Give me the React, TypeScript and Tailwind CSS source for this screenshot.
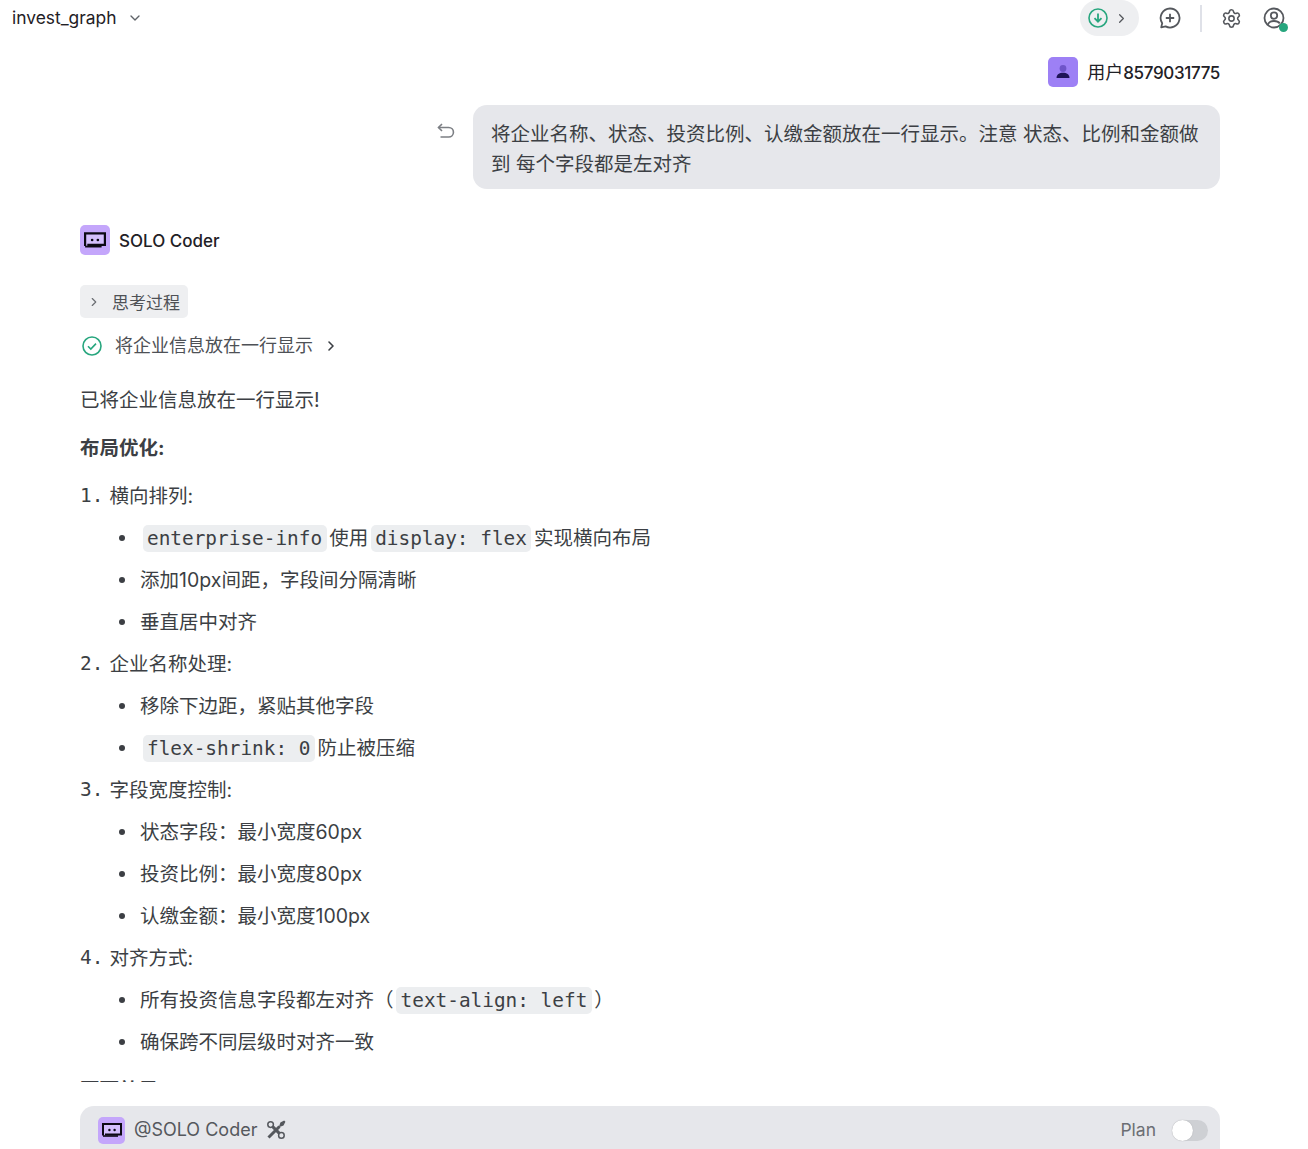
import type { ReactNode } from "react";
import { ChevronDown, ChevronRight, Settings } from "lucide-react";

const bodyFont = "font-['Inter','Noto_Sans_CJK_SC',sans-serif]";

function Code({ children }: { children: ReactNode }) {
  return (
    <code className="mx-[2.5px] rounded-[5px] bg-[#eceef0] px-[4.5px] py-[2px] font-['DejaVu_Sans_Mono',monospace] text-[19.4px] text-[#3c3f44]">
      {children}
    </code>
  );
}

function Item({ children }: { children: ReactNode }) {
  return (
    <li className="flex h-[42px] items-center pl-[39px]">
      <span className="mr-[15px] size-[6px] shrink-0 rounded-full bg-[#3c3f44]" />
      <span>{children}</span>
    </li>
  );
}

function Numbered({ n, children }: { n: number; children: ReactNode }) {
  return (
    <div className="flex h-[42px] items-center">
      <span className="mr-[6px] font-['DejaVu_Sans_Mono',monospace] text-[19.4px]">{n}.</span>
      <span>{children}</span>
    </div>
  );
}

function CoderLogo({ size, className }: { size: number; className: string }) {
  return (
    <span className={`flex shrink-0 items-center justify-center rounded-[5px] bg-[#c4a6fb] ${className}`}>
      <svg width={size} height={size} viewBox="0 0 20 20" fill="none">
        <rect x="2" y="5" width="16" height="9" fill="#d4bffc" />
        <path d="M1 15.5V4h18v10.5H3" stroke="#0d0a14" strokeWidth="2" />
        <path d="M1 16h15" stroke="#0d0a14" strokeWidth="1.6" />
        <circle cx="7.4" cy="10" r="1.2" fill="#0d0a14" />
        <circle cx="12.6" cy="10" r="1.2" fill="#0d0a14" />
      </svg>
    </span>
  );
}

function Header() {
  return (
    <header className="flex h-9 shrink-0 items-center justify-between pl-3 pr-[23px]">
      <div className="flex items-center text-[17.4px] text-[#1f2126]">
        <span>invest_graph</span>
        <ChevronDown size={16} strokeWidth={2} className="ml-[10px] text-[#5f6368]" />
      </div>
      <div className="flex items-center text-[#55585d]">
        <div className="flex h-9 w-[59px] items-center gap-[6px] rounded-full bg-[#eeeff1] pl-[8px]">
          <svg width="20" height="20" viewBox="0 0 20 20" fill="none" stroke="#27a67e" strokeWidth="1.6">
            <circle cx="10" cy="10" r="9" />
            <path d="M10 5.5v8M6.5 10.2 10 13.7l3.5-3.5" strokeWidth="1.8" />
          </svg>
          <ChevronRight size={15} strokeWidth={2} />
        </div>
        <svg className="ml-[20px]" width="22" height="22" viewBox="0 0 22 22" fill="none" stroke="currentColor" strokeWidth="1.8">
          <path d="M11 1.5a9.5 9.5 0 1 1-4.4 17.9L2.2 20.4l1-4.2A9.5 9.5 0 0 1 11 1.5Z" strokeLinejoin="round" />
          <path d="M11 6.8v8.4M6.8 11h8.4" />
        </svg>
        <div className="ml-[19px] h-[27px] w-[2px] bg-[#dfe1e8]" />
        <Settings className="ml-[19px]" size={21} strokeWidth={1.8} />
        <div className="relative ml-[21px]">
          <svg width="22" height="22" viewBox="0 0 22 22" fill="none" stroke="currentColor" strokeWidth="1.8">
            <circle cx="11" cy="11" r="9.5" />
            <circle cx="11" cy="8.6" r="3.2" />
            <path d="M4.8 17.8c1-2.8 3.4-3.8 6.2-3.8s4.6.8 5.8 2.4" />
          </svg>
          <span className="absolute -right-[3px] -bottom-[3px] size-[9px] rounded-full bg-[#27a67e]" />
        </div>
      </div>
    </header>
  );
}

export default function App() {
  return (
    <div className={`flex h-[1149px] flex-col overflow-hidden bg-white text-[19.5px] leading-[30px] text-[#3c3f44] ${bodyFont}`}>
      <Header />
      <main className="h-[1046px] shrink-0 overflow-hidden pl-[80px] pr-[88px]">
        <div className="mt-[21px] flex items-center justify-end gap-[9px]">
          <span className="flex size-[30px] items-center justify-center rounded-[5px] bg-[#9d80f5]">
            <svg width="18" height="18" viewBox="0 0 18 18">
              <circle cx="9" cy="5.5" r="3.4" fill="#6f55c9" />
              <path d="M2.5 15c0-3.6 2.8-5.3 6.5-5.3s6.5 1.7 6.5 5.3z" fill="#1f1458" />
            </svg>
          </span>
          <span className="translate-y-[1px] text-[18px] text-[#1f2126]">
            用户<span className="text-[17px] font-medium tracking-[-0.35px]">8579031775</span>
          </span>
        </div>

        <div className="mt-[18px] flex items-start justify-end gap-[18px]">
          <svg className="mt-[18px]" width="18" height="16" viewBox="0 0 18 16" fill="none" stroke="#7c7f84" strokeWidth="1.6">
            <path d="M5 1 1.5 4.5 5 8" />
            <path d="M1.5 4.5h10.2a4.6 4.6 0 0 1 0 9.5H3.5" />
          </svg>
          <div className="w-[747px] rounded-[14px] bg-[#e6e7eb] px-[18px] pt-[14px] pb-[10px] text-[#3c3f44]">
            将企业名称、状态、投资比例、认缴金额放在一行显示。注意 状态、比例和金额做到 每个字段都是左对齐
          </div>
        </div>

        <div className="mt-[36px] flex items-center gap-[9px]">
          <CoderLogo size={22} className="size-[30px]" />
          <span className="translate-y-[1px] text-[17px] font-medium text-[#1f2126]">SOLO Coder</span>
        </div>

        <div className="mt-[30px] flex h-[33px] w-[108px] items-center gap-[11px] rounded-[5px] bg-[#eeeff1] pl-[7px] text-[17px] text-[#4e5156]">
          <ChevronRight size={14} strokeWidth={2} className="text-[#6b6e73]" />
          <span className="translate-y-[1px]">思考过程</span>
        </div>

        <div className="mt-[11px] flex h-[34px] items-center text-[18px] text-[#4e5156]">
          <svg className="ml-[2px]" width="20" height="20" viewBox="0 0 20 20" fill="none" stroke="#27a67e" strokeWidth="1.6">
            <circle cx="10" cy="10" r="9" />
            <path d="m6 10.3 2.8 2.8L14 7.6" />
          </svg>
          <span className="ml-[13px]">将企业信息放在一行显示</span>
          <ChevronRight className="ml-[10px] text-[#3c3f44]" size={16} strokeWidth={2.4} />
        </div>

        <p className="mt-[22px] flex h-[30px] items-center">已将企业信息放在一行显示!</p>
        <p className="mt-[18px] flex h-[30px] items-center font-bold">布局优化:</p>

        <div className="mt-[12px]">
          <Numbered n={1}>横向排列:</Numbered>
          <ul>
            <Item>
              <Code>enterprise-info</Code>使用<Code>display: flex</Code>实现横向布局
            </Item>
            <Item>添加10px间距{"\uFF0C"}字段间分隔清晰</Item>
            <Item>垂直居中对齐</Item>
          </ul>
          <Numbered n={2}>企业名称处理:</Numbered>
          <ul>
            <Item>移除下边距{"\uFF0C"}紧贴其他字段</Item>
            <Item>
              <Code>flex-shrink: 0</Code>防止被压缩
            </Item>
          </ul>
          <Numbered n={3}>字段宽度控制:</Numbered>
          <ul>
            <Item>状态字段{"\uFF1A"}最小宽度60px</Item>
            <Item>投资比例{"\uFF1A"}最小宽度80px</Item>
            <Item>认缴金额{"\uFF1A"}最小宽度100px</Item>
          </ul>
          <Numbered n={4}>对齐方式:</Numbered>
          <ul>
            <Item>
              所有投资信息字段都左对齐{"\uFF08"}<Code>text-align: left</Code>{"\uFF09"}
            </Item>
            <Item>确保跨不同层级时对齐一致</Item>
          </ul>
        </div>
        <p className="mt-[12px] font-bold">页面效果:</p>
      </main>

      <div className="ml-[80px] mr-[88px] mt-[24px] flex h-[60px] shrink-0 items-start justify-between rounded-t-[14px] bg-[#e6e7eb] pt-[9px] pl-[18px] pr-[12px]">
        <div className="flex items-center gap-[9px] text-[18px] text-[#55585d]">
          <CoderLogo size={20} className="size-[27px]" />
          <span>@SOLO Coder</span>
          <svg width="20" height="20" viewBox="0 0 20 20" fill="none" stroke="currentColor" strokeWidth="1.5">
            <circle cx="4.6" cy="4.6" r="2.8" />
            <circle cx="15.4" cy="15.4" r="2.8" />
            <path d="m6.6 6.6 6.8 6.8" strokeWidth="3" />
            <path d="m2.5 17.5 2-2 9-9" strokeWidth="3" />
            <path d="m14 6 1-3 3-1.5L18.5 2 17 5l-3 1z" fill="currentColor" />
          </svg>
        </div>
        <div className="flex items-center gap-[16px] text-[17.5px] text-[#6b6e73]">
          <span>Plan</span>
          <span className="flex h-[21px] w-[36px] items-center rounded-full bg-[#ced0d4]">
            <span className="size-[21px] rounded-full bg-white shadow-[0_0_1px_#9a9ca0]" />
          </span>
        </div>
      </div>
    </div>
  );
}
